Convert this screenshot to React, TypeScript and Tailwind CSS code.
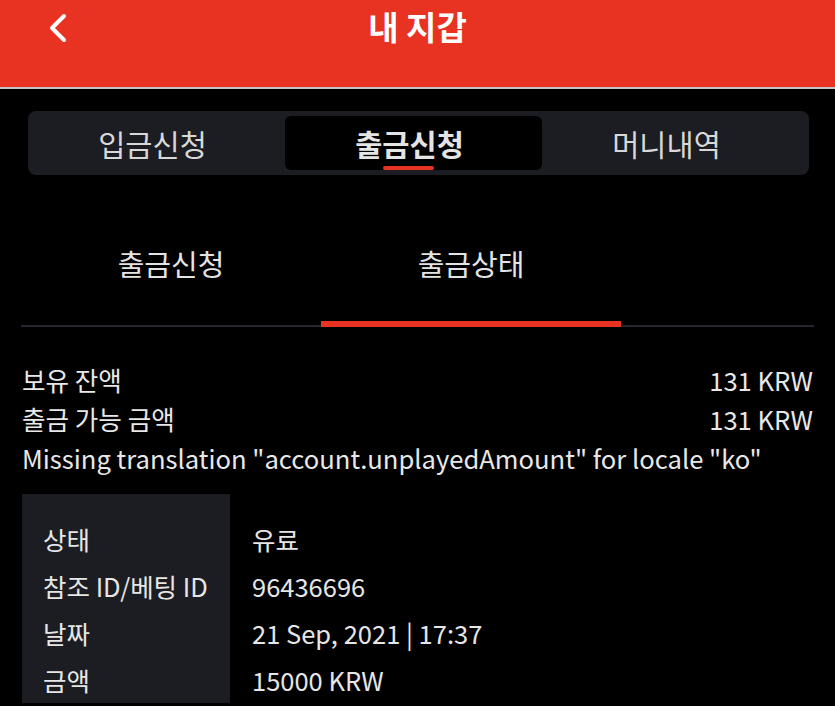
import { useState } from "react";

const font = { fontFamily: '"Noto Sans CJK KR", "Noto Sans", sans-serif' };

const rows = [
  { label: "상태", value: "유료" },
  { label: "참조 ID/베팅 ID", value: "96436696" },
  { label: "날짜", value: "21 Sep, 2021 | 17:37" },
  { label: "금액", value: "15000 KRW" },
];

export default function App() {
  const [tab, setTab] = useState(1);
  const [sub, setSub] = useState(1);
  const tabs = ["입금신청", "출금신청", "머니내역"];
  const subs = ["출금신청", "출금상태"];

  return (
    <div className="w-[835px] h-[706px] overflow-hidden bg-black text-[#e6e6e6]" style={font}>
      <header className="relative h-[89px] bg-[#e83323] border-b-2 border-[#c4c4c4] flex justify-center">
        <button className="absolute left-[44px] top-[12px] text-white">
          <svg width="30" height="32" viewBox="0 0 30 32" fill="none">
            <path d="M20 4 L8 16 L20 28" stroke="white" strokeWidth="4" strokeLinecap="round" strokeLinejoin="round" />
          </svg>
        </button>
        <h1 className="mt-[3px] text-[33px] font-bold text-white leading-[46px]">내 지갑</h1>
      </header>

      <div className="pl-[28px] pr-[26px] pt-[22px]">
        <div className="h-[64px] bg-[#1c1d22] rounded-[8px] flex py-[5px]">
          {tabs.map((t, i) => (
            <button
              key={t}
              onClick={() => setTab(i)}
              className={
                "relative w-[257px] pr-[8px] rounded-[6px] text-[29.5px] flex items-center justify-center " +
                (tab === i ? "bg-black font-bold text-[#e4e4e4]" : "text-[#d8d8d8]")
              }
            >
              {t}
              {tab === i && <span className="absolute bottom-0 left-[98px] w-[51px] h-[4px] rounded-full bg-[#e83323]" />}
            </button>
          ))}
        </div>
      </div>

      <div className="mx-[21px] mt-[44px] flex border-b-2 border-[#262630]">
        {subs.map((s, i) => (
          <button
            key={s}
            onClick={() => setSub(i)}
            className="relative w-[300px] h-[106px] pb-[16px] text-[29px] text-[#e4e4e4] flex items-center justify-center"
          >
            {s}
            {sub === i && <span className="absolute bottom-[-2px] left-0 w-full h-[6px] bg-[#e83323]" />}
          </button>
        ))}
      </div>

      <div className="mx-[22px] mt-[33px] text-[25.6px] text-[#e8e8e8]">
        <div className="flex justify-between h-[39px] leading-[39px]">
          <span>보유 잔액</span>
          <span>131 KRW</span>
        </div>
        <div className="flex justify-between h-[39px] leading-[39px]">
          <span>출금 가능 금액</span>
          <span>131 KRW</span>
        </div>
        <div className="h-[39px] leading-[39px]">Missing translation "account.unplayedAmount" for locale "ko"</div>
      </div>

      <div className="mx-[22px] mt-[17px] flex">
        <div className="w-[208px] bg-[#1c1d22] pt-[21px] pl-[21px]">
          {rows.map((r) => (
            <div key={r.label} className="h-[47px] text-[25.5px] leading-[47px]">{r.label}</div>
          ))}
        </div>
        <div className="pt-[21px] pl-[22px]">
          {rows.map((r) => (
            <div key={r.label} className="h-[47px] text-[25.5px] leading-[47px]">{r.value}</div>
          ))}
        </div>
      </div>
    </div>
  );
}
